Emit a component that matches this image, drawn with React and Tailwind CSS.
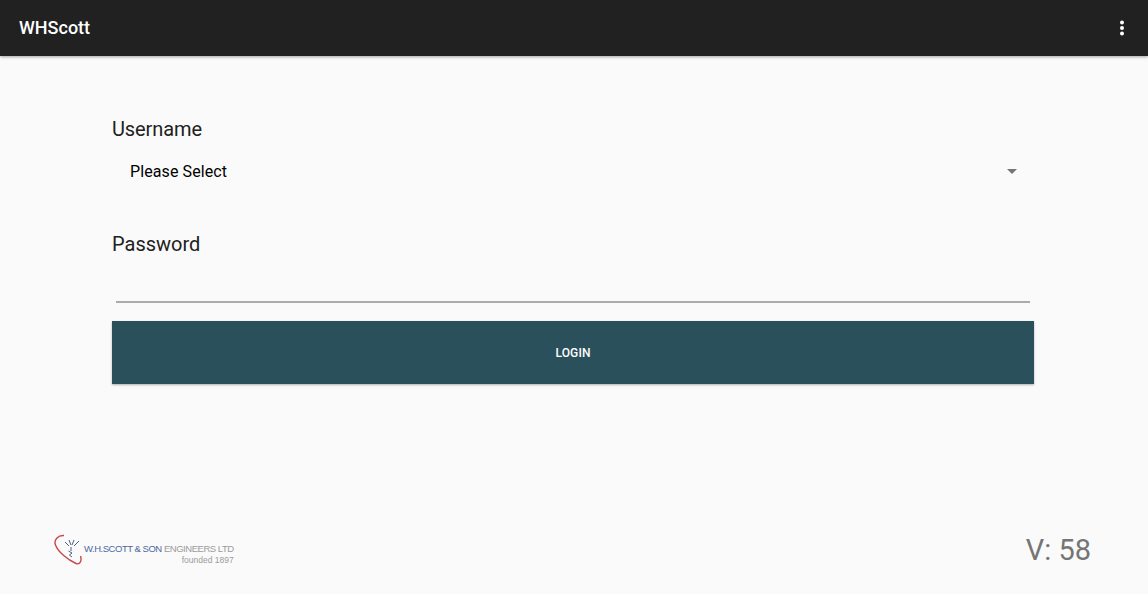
export default function App() {
  return (
    <div className="flex h-[594px] w-[1148px] flex-col overflow-hidden bg-[#fafafa] font-['Roboto',sans-serif]">
      <header className="flex h-14 shrink-0 items-center justify-between bg-[#212121] pb-px pl-[19px] pr-6 shadow-[0_1px_3px_rgba(0,0,0,0.35)]">
        <span className="text-[18px] font-medium text-white">WHScott</span>
        <svg width="4" height="16" viewBox="0 0 4 16" className="fill-white">
          <circle cx="2" cy="2.5" r="2" />
          <circle cx="2" cy="8" r="2" />
          <circle cx="2" cy="13.5" r="2" />
        </svg>
      </header>

      <main className="flex flex-1 flex-col pl-[112px] pr-[114px] pt-[60px]">
        <label className="h-[26px] text-[20px] leading-[26px] tracking-[-0.1px] text-[#212121]">Username</label>
        <div className="mt-[17px] flex h-[26px] items-center justify-between pl-[18px] pr-[17px]">
          <span className="text-[16px] tracking-[0.1px] text-black">Please Select</span>
          <span className="mb-px h-0 w-0 border-x-[5px] border-t-[5px] border-x-transparent border-t-[#757575]" />
        </div>
        <label className="mt-[46px] h-[26px] text-[20px] leading-[26px] text-[#212121]">Password</label>
        <div className="mx-1 mt-[44px] h-[2px] bg-[#ababab]" />
        <button className="mt-[18px] flex h-[63px] items-center justify-center bg-[#2a505c] text-[12px] font-medium tracking-[0.15px] text-white shadow-[0_1px_2px_rgba(0,0,0,0.3)]">
          LOGIN
        </button>
      </main>

      <footer className="mb-[26px] flex items-center justify-between pl-[54px] pr-[57px]">
        <div className="flex items-start">
          <svg width="30" height="32" viewBox="0 0 30 32" fill="none">
            <path d="M10 1.5C4 1 -0.5 6 1.5 11C4 18 14 26 22 29.5C26 31 28 27 26.5 22" stroke="#c8484a" strokeWidth="1.4" />
            <path d="M11 8l4 4M15 6l2 5M20 6l-2 5M25 7l-5 5M17 13v4M14.5 17l3.5 2-2.5 2 2.5 2" stroke="#3d4d7a" strokeWidth="0.9" />
          </svg>
          <div className="pt-[9px] text-[#9a9a9a]">
            <div className="whitespace-nowrap font-['Liberation_Sans',sans-serif] text-[9.5px] font-light leading-[12px] tracking-[-0.47px]">
              <span className="text-[#4f67a0]">W.H.SCOTT &amp; SON</span> ENGINEERS LTD
            </div>
            <div className="text-right font-['Liberation_Sans',sans-serif] text-[8.5px] leading-[10px]">founded 1897</div>
          </div>
        </div>
        <span className="text-[29px] leading-[36px] text-[#757575]">V: 58</span>
      </footer>
    </div>
  );
}
